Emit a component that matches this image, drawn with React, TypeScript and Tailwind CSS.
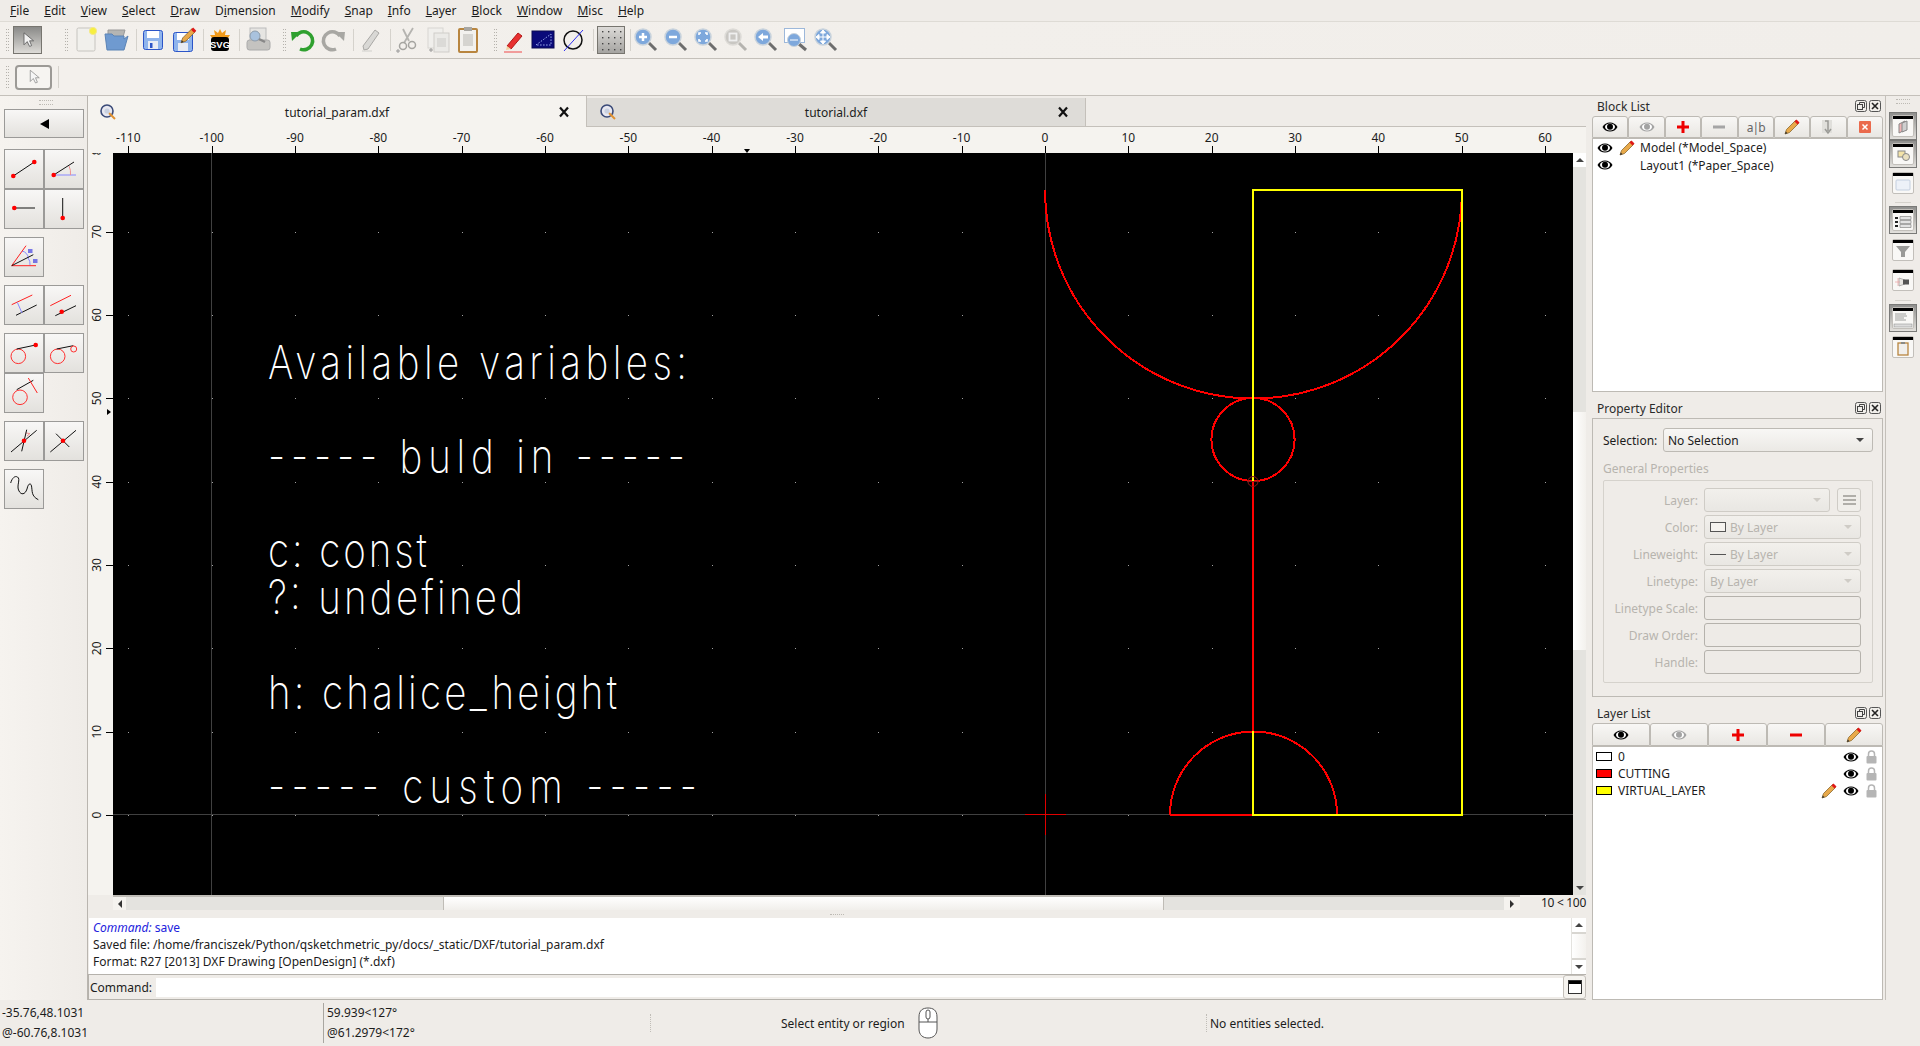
import type { ReactNode } from "react";

const X = (u: number) => 1045 + 8.3333 * u;
const Y = (u: number) => 815 - 8.3333 * u;

const menus: [string, string, string][] = [
  ["", "F", "ile"], ["", "E", "dit"], ["", "V", "iew"], ["", "S", "elect"], ["", "D", "raw"],
  ["D", "i", "mension"], ["", "M", "odify"], ["", "S", "nap"], ["", "I", "nfo"], ["", "L", "ayer"],
  ["", "B", "lock"], ["", "W", "indow"], ["", "M", "isc"], ["", "H", "elp"],
];

const Handle = ({ className = "" }: { className?: string }) => (
  <svg width="3" height="22" className={`shrink-0 ${className}`}>
    {[0, 3, 6, 9, 12, 15, 18, 21].map((y) => (
      <g key={y} fill="#b5b2ac">
        <rect x="0" y={y} width="1" height="1" />
        <rect x="2" y={y} width="1" height="1" />
      </g>
    ))}
  </svg>
);

const Sep = ({ className = "" }: { className?: string }) => (
  <div className={`w-[1px] h-[22px] bg-[#d5d2cc] shrink-0 ${className}`} />
);

const Slot = ({ children, className = "" }: { children: ReactNode; className?: string }) => (
  <svg width="30" height="30" viewBox="0 0 30 30" className={`shrink-0 ${className}`}>
    {children}
  </svg>
);

const Arrow = ({ fill = "#fff", stroke = "#333" }: { fill?: string; stroke?: string }) => (
  <path d="M10 6 L10 21 L14 17 L17 23 L19.5 22 L17 16 L22 16 Z" fill={fill} stroke={stroke} strokeWidth="1" />
);

const Pencil = ({ x = 0, y = 0, s = 1 }: { x?: number; y?: number; s?: number }) => (
  <g transform={`translate(${x} ${y}) scale(${s})`}>
    <path d="M1 15 L2.5 10.5 L11.5 1.5 L14.5 4.5 L5.5 13.5 Z" fill="#e8a94a" stroke="#8a6a30" strokeWidth="0.8" />
    <path d="M10.5 2.5 L12.5 0.5 L15.5 3.5 L13.5 5.5 Z" fill="#e01818" />
    <path d="M1 15 L1.8 12.5 L3.5 14.2 Z" fill="#333" />
  </g>
);

const Eye = ({ gray = false }: { gray?: boolean }) => (
  <svg width="16" height="12" viewBox="0 0 16 12" className="shrink-0">
    <path d="M0.5 6 C3.5 0 12.5 0 15.5 6 C12.5 12 3.5 12 0.5 6 Z" fill={gray ? "#a3a3a3" : "#000"} />
    <ellipse cx="8" cy="6" rx="5" ry="3.4" fill="#fff" />
    <circle cx="8" cy="5.8" r="3" fill={gray ? "#a3a3a3" : "#000"} />
  </svg>
);

const PencilIcon = () => (
  <svg width="16" height="16" viewBox="0 0 16 16" className="shrink-0">
    <Pencil />
  </svg>
);

const Lock = () => (
  <svg width="11" height="14" viewBox="0 0 11 14" className="shrink-0">
    <path d="M2.5 6 V4 A3 3 0 0 1 8.5 4 V6" fill="none" stroke="#b5b5b5" strokeWidth="1.5" />
    <rect x="0.5" y="6" width="10" height="7.5" rx="1" fill="#b5b5b5" />
  </svg>
);

const Magnifier = ({ children, gray = false }: { children: ReactNode; gray?: boolean }) => (
  <Slot>
    <line x1="17" y1="17" x2="25" y2="25" stroke={gray ? "#b5b3af" : "#6d6d6d"} strokeWidth="3" />
    <circle cx="12" cy="12" r="8" fill={gray ? "#c9c7c3" : "#7ea8dc"} stroke={gray ? "#dddbd7" : "#c9d3dc"} strokeWidth="1.5" />
    {children}
  </Slot>
);

const FloatClose = () => (
  <div className="flex gap-[2px]">
    <svg width="12" height="12" viewBox="0 0 12 12">
      <rect x="0.5" y="0.5" width="11" height="11" rx="2" fill="#f0eeea" stroke="#555" />
      <rect x="2.5" y="4.5" width="5" height="5" fill="none" stroke="#444" />
      <path d="M4.5 4.5 V2.5 H9.5 V7.5 H7.5" fill="none" stroke="#444" />
    </svg>
    <svg width="12" height="12" viewBox="0 0 12 12">
      <rect x="0.5" y="0.5" width="11" height="11" rx="2" fill="#f0eeea" stroke="#555" />
      <path d="M3 3 L9 9 M9 3 L3 9" stroke="#222" strokeWidth="1.6" />
    </svg>
  </div>
);

const DockTitle = ({ title, className = "" }: { title: string; className?: string }) => (
  <div className={`flex items-center justify-between pl-[5px] pr-[2px] shrink-0 ${className}`}>
    <span className="text-[#2a2a2a]">{title}</span>
    <FloatClose />
  </div>
);

const DockButton = ({ children }: { children: ReactNode }) => (
  <div className="flex-1 h-full flex items-center justify-center border border-[#bdbab4] rounded-t-[3px] bg-gradient-to-b from-[#f8f7f5] to-[#e9e7e3]">
    {children}
  </div>
);

const Red = ({ d }: { d: string }) => <path d={d} fill="none" stroke="#ff2020" strokeWidth="1" />;
const Blk = ({ d }: { d: string }) => <path d={d} fill="none" stroke="#111" strokeWidth="1" />;
const Blu = ({ d }: { d: string }) => <path d={d} fill="none" stroke="#8888ff" strokeWidth="1" />;
const Dot = ({ x, y }: { x: number; y: number }) => <circle cx={x} cy={y} r="2.3" fill="#ff0000" />;

const Tool = ({ children }: { children?: ReactNode }) => (
  <div className="w-[40px] h-[40px] border border-[#9b9a98] bg-gradient-to-b from-[#f8f7f6] to-[#e3e1dd]">
    {children && (
      <svg width="38" height="38" viewBox="1 1 38 38">
        {children}
      </svg>
    )}
  </div>
);

const ToolRow = ({ children }: { children: ReactNode }) => <div className="flex">{children}</div>;

const leftGroups: ReactNode[][][] = [
  [
    [
      <><Blk d="M9.3 27 L30.3 13" /><Dot x={9.3} y={27} /><Dot x={30.3} y={13} /></>,
      <><Blk d="M9.7 26 L30 13" /><Blu d="M9.7 26 H32" /><path d="M25 17 Q27 21 26.5 26" fill="none" stroke="#f09090" /><Dot x={9.7} y={26} /></>,
    ],
    [
      <><Blk d="M10.3 19 H31" /><Dot x={10.3} y={19} /></>,
      <><Blk d="M18.7 9 V29" /><Dot x={18.7} y={29} /></>,
    ],
  ],
  [
    [
      <>
        <Blu d="M18 14 Q23 15 24.5 21 M24 21 Q26.5 24 26 28" />
        <Red d="M7.7 28.7 L22 8.7 M7.7 28.7 H32" />
        <Blk d="M7.7 28.7 L29.3 17.7" />
        <path d="M24 13 H28.5 M24 15 H28.5 M29 23 H33.5 M29 25 H33.5" stroke="#0000e0" />
      </>,
    ],
  ],
  [
    [
      <><Red d="M7.7 19.7 L28.3 10" /><Blk d="M12 30.3 L32.7 20" /><Blu d="M13.3 17.3 L18 28" /></>,
      <><Red d="M6.3 20.7 L27 10.3" /><Blk d="M11.3 30.7 L32 20.7" /><Dot x={17.7} y={26.7} /></>,
    ],
  ],
  [
    [
      <><circle cx="14.3" cy="23.3" r="7.3" fill="none" stroke="#ff3030" /><Blk d="M12.7 16 L31.7 12" /><Dot x={31.7} y={12} /></>,
      <><circle cx="13.7" cy="23.3" r="7.3" fill="none" stroke="#ff3030" /><Blk d="M12.7 16 L29.3 12.7" /><circle cx="29.7" cy="16" r="3" fill="none" stroke="#ff3030" /></>,
    ],
    [
      <><circle cx="16" cy="24.3" r="7.3" fill="none" stroke="#ff3030" /><Blk d="M12.7 16.7 L29.3 7.3" /><Red d="M24.3 5 L33.3 20" /></>,
    ],
  ],
  [
    [
      <><path d="M21.5 12 L26 12.5 L23 15" fill="none" stroke="#f09090" /><Blk d="M7 31 L32.7 9.3 M17.7 30.3 L22.7 8.7" /><Dot x={20} y={19.7} /></>,
      <><Blk d="M6.3 31 L32 9.3 M12 12.7 L25.3 26" /><Dot x={19} y={19.7} /></>,
    ],
  ],
  [
    [
      <path d="M6.7 14 C8 9 11 6.5 13.5 8 C17 10 12 17 15 22 C17 26 21 26 23 20 C24 15 26.5 13 27.5 17 C28.5 22 27 27 34.3 30.7" fill="none" stroke="#111" strokeWidth="1" />,
    ],
  ],
];

const hLabels = [-110, -100, -90, -80, -70, -60, -50, -40, -30, -20, -10, 0, 10, 20, 30, 40, 50, 60];
const vLabels = [80, 70, 60, 50, 40, 30, 20, 10, 0];
const canvasLines: [string, number, number, number][] = [
  ["Available variables:", 268, 379, 419],
  ["----- buld in -----", 268, 473, 417],
  ["c: const", 268, 567, 159],
  ["?: undefined", 268, 614, 255],
  ["h: chalice_height", 268, 709, 349],
  ["----- custom -----", 268, 803, 429],
];
const TEXT_SQUEEZE = 0.82;

const Canvas = () => {
  const dotsX = Array.from({ length: 18 }, (_, i) => X((i - 11) * 10));
  const dotsY = Array.from({ length: 9 }, (_, i) => Y(i * 10));
  return (
    <svg width="1460" height="742" viewBox="113 153 1460 742" className="block bg-black shrink-0">
      <g fill="#a0a0a0" shapeRendering="crispEdges">
        {dotsX.flatMap((x) => dotsY.map((y) => <rect key={`${x}-${y}`} x={Math.round(x)} y={Math.round(y)} width="1" height="1" />))}
      </g>
      <g stroke="#404040" shapeRendering="crispEdges">
        <line x1="113" x2="1573" y1="814.5" y2="814.5" />
        <line x1="1045.5" x2="1045.5" y1="153" y2="895" />
        <line x1="211.5" x2="211.5" y1="153" y2="895" />
      </g>
      <g stroke="#e00000" shapeRendering="crispEdges">
        <line x1="1025" x2="1066" y1="814.5" y2="814.5" />
        <line x1="1045.5" x2="1045.5" y1="794" y2="835" />
      </g>
      {canvasLines.map(([text, x, y, len]) => (
        <g key={text} transform={`translate(${x} ${y}) scale(${TEXT_SQUEEZE} 1)`}>
          <text textLength={len / TEXT_SQUEEZE} lengthAdjust="spacing" fill="#fff" fontSize="47" fontWeight="200" fontFamily="Inter, sans-serif">
            {text}
          </text>
        </g>
      ))}
      <g fill="none" stroke="#ff0000" strokeWidth="2" shapeRendering="crispEdges">
        <path d="M1045 190 A 208.5 208.5 0 0 0 1462 190" />
        <circle cx="1253" cy="439.5" r="41.6" />
        <path d="M1170 815 A 83.3 83.3 0 0 1 1337 815" />
        <path d="M1170 815 H1253" />
      </g>
      <rect x="1253" y="190" width="209" height="625" fill="none" stroke="#ffff00" strokeWidth="2" shapeRendering="crispEdges" />
      <path d="M1253 481 V731" stroke="#ff0000" strokeWidth="2" shapeRendering="crispEdges" />
      <g fill="none" stroke="#8c1a1a" strokeWidth="1">
        <circle cx="1253" cy="481.5" r="5" />
        <path d="M1247 481.5 H1259" />
      </g>
    </svg>
  );
};

const DockBarIcon = ({ checked = false, className = "", children }: { checked?: boolean; className?: string; children?: ReactNode }) => (
  <div className={`w-[28px] flex items-center justify-center shrink-0 ${checked ? "h-[28px] border border-[#7a7a78] bg-gradient-to-b from-[#8f8f8d] to-[#e3e1dd]" : "h-[22px]"} ${className}`}>
    <svg width="22" height="22" viewBox="0 0 22 22">
      <rect x="0.5" y="0.5" width="21" height="21" rx="1.5" fill="#f9f8f6" stroke="#c2bfba" />
      <rect x="1" y="1" width="20" height="3" fill="#000" />
      {children}
    </svg>
  </div>
);

const Combo = ({ children, className = "" }: { children?: ReactNode; className?: string }) => (
  <div className={`h-[24px] flex items-center px-[5px] border border-[#cfccc6] rounded-[3px] bg-gradient-to-b from-[#f2f0ec] to-[#e9e7e3] text-[#b7b4ae] ${className}`}>
    {children}
    <span className="ml-auto mr-[3px] w-0 h-0 border-x-[4px] border-x-transparent border-t-[4px] border-t-[#cfccc6]" />
  </div>
);

const PropRow = ({ label, children }: { label: string; children: ReactNode }) => (
  <div className="flex items-center h-[24px] mb-[3px]">
    <span className="w-[94px] text-right text-[#b7b4ae] shrink-0">{label}</span>
    <div className="ml-[6px] flex flex-1 gap-[7px]">{children}</div>
  </div>
);

const Field = () => <div className="flex-1 h-[24px] border border-[#b5b2ac] rounded-[3px] bg-[#eeebe7]" />;

const Dotted = () => <div className="w-[1px] h-[18px] border-l border-dotted border-[#c0bdb7] shrink-0" />;

export default function App() {
  return (
    <div className="w-[1920px] h-[1046px] overflow-hidden flex flex-col bg-[#efece8] text-[12px] leading-[17px] text-[#1c1c1c] font-['Noto_Sans',sans-serif]">
      {/* menu bar */}
      <div className="h-[22px] flex items-center pl-[2.5px] border-b border-[#dedbd5] shrink-0">
        {menus.map(([before, key, rest], i) => (
          <span key={i} className="px-[7.5px]">
            {before}<span className="underline">{key}</span>{rest}
          </span>
        ))}
      </div>

      {/* main toolbar */}
      <div className="h-[37px] flex items-center pl-[6px] border-b border-[#c4c0ba] bg-gradient-to-r from-[#f3f0ec] to-[#f1eeea] shrink-0">
        <Handle />
        <div className="ml-[4px] w-[29px] h-[28px] flex items-center justify-center border border-[#77756f] bg-gradient-to-b from-[#8a8a88] to-[#dddbd7] shrink-0">
          <svg width="24" height="26" viewBox="0 0 30 30"><Arrow fill="#f2f2f2" stroke="#555" /></svg>
        </div>
        <Handle className="ml-[23px]" />
        <Slot className="ml-[3px]">
          <rect x="6" y="3" width="18" height="23" rx="1.5" fill="#f1f0ec" stroke="#c6c4bf" />
          <circle cx="22" cy="6" r="3.6" fill="#f7ef40" stroke="#f3e98c" />
        </Slot>
        <Slot>
          <path d="M7 5 H24 L22 12 H7 Z" fill="#b5b5b3" stroke="#999" />
          <path d="M4 9 H11 L13 11 H23 V14 L27 11 L23 25 H6 Z" fill="#6f9ad0" stroke="#5b83b5" />
        </Slot>
        <Sep className="ml-[5px]" />
        <Slot className="ml-[1px]">
          <rect x="5.5" y="5.5" width="19" height="19" rx="2" fill="#8fb4ec" stroke="#2c55c8" />
          <rect x="9" y="6" width="12" height="7" fill="#fff" />
          <rect x="10" y="16" width="10" height="8" fill="#e8ecf4" />
          <rect x="12" y="18" width="2.5" height="5" fill="#2c55c8" />
        </Slot>
        <Slot className="ml-[1px]">
          <rect x="4.5" y="7.5" width="19" height="19" rx="2" fill="#8fb4ec" stroke="#2c55c8" />
          <rect x="8" y="8" width="12" height="7" fill="#fff" />
          <rect x="9" y="18" width="10" height="8" fill="#e8ecf4" />
          <Pencil x={11} y={2} s={1.05} />
        </Slot>
        <Sep className="ml-[4px]" />
        <Slot className="ml-[1px]">
          <path d="M15 4 L17 8 L21 5 L20 10 L25 10 L23 13 H7 L5 10 L10 10 L9 5 L13 8 Z" fill="#f09a1c" />
          <rect x="6" y="12" width="18" height="14" rx="3" fill="#000" />
          <text x="15" y="23" textAnchor="middle" fontSize="9.5" fontWeight="700" fill="#fff" fontFamily="'Liberation Sans', sans-serif">SVG</text>
        </Slot>
        <Sep className="ml-[4px]" />
        <Slot className="ml-[3px]">
          <rect x="7" y="3" width="16" height="14" fill="#e6e5e2" stroke="#bbb" />
          <rect x="4" y="15" width="23" height="10" rx="2.5" fill="#c4c3c0" stroke="#aaa" />
          <circle cx="12" cy="11" r="5" fill="#a9c2dd" stroke="#8d9cab" />
          <path d="M16 14 L22 17" stroke="#888" strokeWidth="2.5" />
        </Slot>
        <Handle className="ml-[10px]" />
        <Slot className="ml-[2px]">
          <path d="M8 11 A9 9 0 1 1 12 24" fill="none" stroke="#2fa02f" strokeWidth="3.5" />
          <path d="M3 7 L13 7 L4 16 Z" fill="#2fa02f" />
        </Slot>
        <Slot>
          <path d="M22 11 A9 9 0 1 0 18 24" fill="none" stroke="#a8a7a3" strokeWidth="3.5" />
          <path d="M27 7 L17 7 L26 16 Z" fill="#a8a7a3" />
        </Slot>
        <Sep className="ml-[5px]" />
        <Slot className="ml-[1px]">
          <path d="M8 21 L20 5 L24 8 L13 24 L9 25 Z" fill="#d9d8d5" stroke="#a9a8a5" />
          <path d="M7 26 H17" stroke="#d0cfcb" />
        </Slot>
        <Sep className="ml-[5px]" />
        <Slot className="ml-[1px]">
          <path d="M21 3 L12 18 M11 4 L17 16" stroke="#b5b4b0" strokeWidth="1.8" />
          <circle cx="11" cy="21" r="3.5" fill="none" stroke="#a5a4a0" strokeWidth="1.5" />
          <circle cx="20" cy="20" r="3.5" fill="none" stroke="#a5a4a0" strokeWidth="1.5" />
          <path d="M4 26 H8 M6 24 V28" stroke="#999" />
        </Slot>
        <Slot className="ml-[1px]">
          <rect x="5" y="3" width="15" height="20" fill="#f0efec" stroke="#d8d6d2" />
          <rect x="11" y="8" width="15" height="19" fill="#ebeae7" stroke="#cfcdc9" />
          <rect x="14" y="13" width="9" height="9" fill="#dbdad7" />
          <path d="M6 25 H10 M8 23 V27" stroke="#999" />
        </Slot>
        <Slot>
          <rect x="6" y="4" width="18" height="23" rx="1" fill="#f2f1ee" stroke="#b8853f" strokeWidth="2" />
          <rect x="11" y="2" width="8" height="4" fill="#a8a7a3" />
          <rect x="10" y="9" width="10" height="12" fill="#d5d4d0" />
        </Slot>
        <Handle className="ml-[11px]" />
        <Slot className="ml-[1px]">
          <path d="M9 21 L20 8 L24 11 L13 24 Z" fill="#e83030" stroke="#b01818" />
          <path d="M9 21 L8 25 L13 24 Z" fill="#f4d0a0" />
          <path d="M6 27 H24" stroke="#f08080" strokeWidth="1.5" />
        </Slot>
        <Slot>
          <rect x="4" y="6" width="22" height="17" fill="#0a0a7a" stroke="#0a0a50" />
          <path d="M8 20 L23 9 V20 Z" fill="none" stroke="#9fb0f0" strokeDasharray="1.5 1.5" />
        </Slot>
        <Slot>
          <circle cx="15" cy="15" r="9" fill="none" stroke="#111" strokeWidth="1.5" />
          <path d="M6 26 L25 5" stroke="#3030f0" />
        </Slot>
        <Sep className="ml-[5px]" />
        <div className="ml-[3px] w-[28px] h-[28px] border border-[#77756f] bg-gradient-to-b from-[#dddbd8] to-[#a5a4a1] shrink-0 flex items-center justify-center">
          <svg width="22" height="22" viewBox="0 0 22 22" fill="#444">
            {[2, 8, 14, 20].flatMap((y) => [2, 8, 14, 20].map((x) => <rect key={`${x}${y}`} x={x} y={y} width="1.4" height="1.4" />))}
          </svg>
        </div>
        <Sep className="ml-[5px]" />
        <Magnifier><path d="M8 12 H16 M12 8 V16" stroke="#fff" strokeWidth="2.5" /></Magnifier>
        <Magnifier><path d="M8 12 H16" stroke="#fff" strokeWidth="2.5" /></Magnifier>
        <Magnifier><path d="M8 10 V8 H10 M14 8 H16 V10 M16 14 V16 H14 M10 16 H8 V14" stroke="#fff" strokeWidth="1.6" fill="none" /></Magnifier>
        <Magnifier gray><rect x="8.5" y="8.5" width="7" height="7" fill="none" stroke="#efefef" strokeWidth="1.8" /></Magnifier>
        <Magnifier><path d="M7 12 L12 8 V10.5 H17 V13.5 H12 V16 Z" fill="#fff" /></Magnifier>
        <Slot>
          <line x1="18" y1="19" x2="25" y2="25" stroke="#6d6d6d" strokeWidth="3" />
          <rect x="3.5" y="3.5" width="20" height="14" fill="#fff" stroke="#9db8da" />
          <circle cx="13" cy="15" r="6.5" fill="#7ea8dc" stroke="#c9d3dc" />
          <path d="M9 15 H17" stroke="#fff" />
        </Slot>
        <Magnifier><path d="M12 5 L14.5 8 H9.5 Z M12 19 L9.5 16 H14.5 Z M5 12 L8 9.5 V14.5 Z M19 12 L16 14.5 V9.5 Z M12 8 V16 M8 12 H16" fill="#fff" stroke="#fff" /></Magnifier>
      </div>

      {/* option toolbar */}
      <div className="h-[37px] flex items-center pl-[6px] border-b border-[#c4c0ba] bg-[#f3f0ec] shrink-0">
        <Handle />
        <div className="ml-[6px] w-[37px] h-[25px] flex items-center justify-center rounded-[4px] border-2 border-[#9c9a96] bg-[#f6f4f1] shrink-0">
          <svg width="18" height="18" viewBox="3 3 24 24"><Arrow fill="#f6f6f6" stroke="#888" /></svg>
        </div>
        <Sep className="ml-[6px]" />
      </div>

      <div className="h-[904px] flex shrink-0">
        {/* left tools */}
        <div className="w-[88px] pl-[4px] border-r border-[#b9b5af] bg-gradient-to-r from-[#f6f3ef] to-[#efece8] shrink-0 flex flex-col">
          <div className="h-[13px] flex justify-center items-center">
            <div className="w-[14px] h-[5px] border-y border-dotted border-[#bdbab4]" />
          </div>
          <div className="w-[80px] h-[29px] flex items-center justify-center border border-[#9b9a98] bg-gradient-to-b from-[#f8f7f6] to-[#e3e1dd]">
            <span className="w-0 h-0 border-y-[5px] border-y-transparent border-r-[9px] border-r-black" />
          </div>
          <div className="mt-[11px] flex flex-col gap-[8px]">
            {leftGroups.map((rows, g) => (
              <div key={g} className="flex flex-col">
                {rows.map((row, r) => (
                  <ToolRow key={r}>
                    {row.map((icon, i) => (
                      <Tool key={i}>{icon}</Tool>
                    ))}
                  </ToolRow>
                ))}
              </div>
            ))}
          </div>
        </div>

        {/* centre */}
        <div className="w-[1498px] flex flex-col shrink-0">
          <div className="h-[31px] flex shrink-0">
            <div className="w-[499px] flex items-center pt-[1px] relative bg-[#f5f3ef] border-r border-[#c4c0ba]">
              <TabIcon className="left-[12px] top-[8px]" />
              <span className="w-full text-center">tutorial_param.dxf</span>
              <span className="absolute left-[470px] top-[10px]"><TabClose /></span>
            </div>
            <div className="w-[499px] mt-[2px] flex items-center relative bg-[#dedcd8] border-r border-b border-[#c4c0ba]">
              <TabIcon className="left-[13px] top-[6px]" />
              <span className="w-full text-center">tutorial.dxf</span>
              <span className="absolute left-[470px] top-[8px]"><TabClose /></span>
            </div>
            <div className="flex-1 border-b border-[#c4c0ba]" />
          </div>

          <div className="flex flex-col bg-[#f5f3ef] shrink-0">
            <svg width="1498" height="26" viewBox="88 127 1498 26" className="block shrink-0">
              {hLabels.map((u) => (
                <g key={u}>
                  <text x={X(u)} y="141.5" textAnchor="middle" fontSize="12" fill="#1c1c1c" fontFamily="'Noto Sans', sans-serif">{u}</text>
                  <line x1={Math.round(X(u)) + 0.5} x2={Math.round(X(u)) + 0.5} y1="146" y2="153" stroke="#000" />
                </g>
              ))}
              <path d="M744 149 H750 L747 153 Z" fill="#000" />
            </svg>
            <div className="flex h-[742px]">
              <svg width="25" height="742" viewBox="88 153 25 742" className="block shrink-0">
                {vLabels.map((u) => (
                  <g key={u}>
                    <text transform={`translate(101 ${Y(u)}) rotate(-90)`} textAnchor="middle" fontSize="12" fill="#1c1c1c" fontFamily="'Noto Sans', sans-serif">{u}</text>
                    <line x1="106" x2="113" y1={Math.round(Y(u)) + 0.5} y2={Math.round(Y(u)) + 0.5} stroke="#000" />
                  </g>
                ))}
                <path d="M107 409 V415 L111 412 Z" fill="#000" />
              </svg>
              <Canvas />
              <div className="w-[13px] flex flex-col bg-[#e4e3df]">
                <div className="h-[14px] bg-white flex items-center justify-center"><Tri dir="up" /></div>
                <div className="h-[245px]" />
                <div className="h-[238px] bg-gradient-to-r from-white to-[#f3f1ed]" />
                <div className="flex-1" />
                <div className="h-[15px] flex items-center justify-center"><Tri dir="down" /></div>
              </div>
            </div>
          </div>

          {/* horizontal scroll */}
          <div className="h-[15px] flex border-t-2 border-[#bfbcb6] shrink-0">
            <div className="w-[25px] bg-[#efece8] -mt-[2px]" />
            <div className="w-[13px] flex items-center justify-center bg-[#f5f3ef]"><span className="w-0 h-0 border-y-[4px] border-y-transparent border-r-[4px] border-r-[#333]" /></div>
            <div className="w-[318px] bg-[#e4e3df] border-r border-[#bfbcb6]" />
            <div className="w-[719px] bg-gradient-to-b from-white to-[#f1efeb]" />
            <div className="w-[341px] bg-[#e4e3df] border-l border-[#bfbcb6]" />
            <div className="w-[16px] flex items-center justify-center bg-[#f5f3ef]"><span className="w-0 h-0 border-y-[4px] border-y-transparent border-l-[4px] border-l-[#333]" /></div>
            <div className="flex-1 flex items-center justify-end -mt-[2px] bg-[#efece8] text-[12px] tracking-[-0.3px]">10 &lt; 100</div>
          </div>
          <div className="h-[8px] flex justify-center items-center shrink-0">
            <div className="w-[14px] h-[1px] border-t border-dotted border-[#bdbab4]" />
          </div>

          {/* command output */}
          <div className="h-[57px] flex bg-white border-b border-[#b5b2ac] shrink-0">
            <div className="flex-1 pl-[4px] pt-[1px] border-l border-[#efece8]">
              <div className="text-[#2222dd]"><i>Command:</i> save</div>
              <div>Saved file: /home/franciszek/Python/qsketchmetric_py/docs/_static/DXF/tutorial_param.dxf</div>
              <div>Format: R27 [2013] DXF Drawing [OpenDesign] (*.dxf)</div>
            </div>
            <div className="w-[15px] flex flex-col items-center bg-white border-l border-[#e4e3df]">
              <div className="h-[14px] flex items-center"><Tri dir="up" /></div>
              <div className="h-[28px] w-full bg-gradient-to-r from-white to-[#f3f1ed] border-y-2 border-[#d8d6d1]" />
              <div className="flex-1 flex items-center"><Tri dir="down" /></div>
            </div>
          </div>
          <div className="h-[25px] flex items-center pl-[1px] border-l border-[#b5b2ac] border-b border-b-[#b5b2ac] shrink-0">
            <span className="w-[66px]">Command:</span>
            <div className="w-[1407px] h-[19px] bg-white" />
            <div className="w-[23px] h-[24px] flex items-center justify-center rounded-[3px] border border-[#c4c0ba] bg-[#f5f3ef]">
              <svg width="14" height="14" viewBox="0 0 14 14">
                <rect x="0.5" y="0.5" width="13" height="13" fill="#fff" stroke="#333" />
                <rect x="1" y="1" width="12" height="3" fill="#000" />
              </svg>
            </div>
          </div>
        </div>

        {/* docks */}
        <div className="w-[300px] pl-[6px] pr-[2px] border-r border-[#c4c0ba] flex flex-col shrink-0">
          <DockTitle title="Block List" className="h-[20px]" />
          <div className="h-[22px] flex shrink-0">
            <DockButton><Eye /></DockButton>
            <DockButton><Eye gray /></DockButton>
            <DockButton>
              <svg width="14" height="14"><path d="M7 1 V13 M1 7 H13" stroke="#ee0000" strokeWidth="3" /></svg>
            </DockButton>
            <DockButton>
              <svg width="14" height="14"><path d="M1 7 H13" stroke="#a5a5a5" strokeWidth="3" /></svg>
            </DockButton>
            <DockButton><span className="text-[#666] tracking-[-1px]">a|b</span></DockButton>
            <DockButton><PencilIcon /></DockButton>
            <DockButton>
              <svg width="14" height="16" viewBox="0 0 14 16">
                <rect x="1" y="1" width="10" height="13" fill="#e0dfdb" />
                <path d="M4 2 H7 V12 M4 10 L7 14 L10 10" fill="none" stroke="#9a9a96" strokeWidth="1.5" />
              </svg>
            </DockButton>
            <DockButton>
              <svg width="12" height="12">
                <rect width="12" height="12" rx="1" fill="#ea6a4c" />
                <path d="M3.5 3.5 L8.5 8.5 M8.5 3.5 L3.5 8.5" stroke="#fff" strokeWidth="1.5" />
              </svg>
            </DockButton>
          </div>
          <div className="h-[254px] bg-white border border-[#bdbab4] shrink-0">
            {[
              ["Model (*Model_Space)", true],
              ["Layout1 (*Paper_Space)", false],
            ].map(([name, active]) => (
              <div key={String(name)} className="h-[17.5px] flex items-center pl-[4px]">
                <Eye />
                <span className="w-[23px] flex justify-center pl-[4px]">{active && <PencilIcon />}</span>
                <span className="ml-[4px]">{name}</span>
              </div>
            ))}
          </div>
          <DockTitle title="Property Editor" className="h-[26px] pt-[6px]" />
          <div className="h-[279px] border border-[#bdbab4] pl-[10px] pr-[9px] pt-[9px] shrink-0">
            <div className="flex items-center">
              <span className="w-[60px]">Selection:</span>
              <div className="w-[210px] h-[24px] flex items-center px-[4px] border border-[#bdbab4] rounded-[3px] bg-gradient-to-b from-[#f8f7f5] to-[#ebe9e5]">
                No Selection
                <span className="ml-auto mr-[4px] w-0 h-0 border-x-[4px] border-x-transparent border-t-[4px] border-t-[#444]" />
              </div>
            </div>
            <div className="mt-[8px] text-[#b7b4ae]">General Properties</div>
            <div className="mt-[3px] w-[270px] h-[203px] border border-[#d5d2cc] rounded-[2px] pt-[7px] pr-[11px]">
              <PropRow label="Layer:">
                <Combo className="flex-1" />
                <div className="w-[24px] h-[24px] flex flex-col items-center justify-center gap-[2px] border border-[#cfccc6] rounded-[3px] bg-[#f0eeea]">
                  <span className="w-[13px] h-[2px] bg-[#b0aea9]" />
                  <span className="w-[13px] h-[2px] bg-[#b0aea9]" />
                  <span className="w-[13px] h-[2px] bg-[#b0aea9]" />
                </div>
              </PropRow>
              <PropRow label="Color:">
                <Combo className="flex-1">
                  <span className="w-[16px] h-[10px] border border-[#555] bg-[#f5f3ef] mr-[4px]" />By Layer
                </Combo>
              </PropRow>
              <PropRow label="Lineweight:">
                <Combo className="flex-1">
                  <span className="w-[16px] h-[1px] bg-[#555] mr-[4px]" />By Layer
                </Combo>
              </PropRow>
              <PropRow label="Linetype:">
                <Combo className="flex-1">By Layer</Combo>
              </PropRow>
              <PropRow label="Linetype Scale:"><Field /></PropRow>
              <PropRow label="Draw Order:"><Field /></PropRow>
              <PropRow label="Handle:"><Field /></PropRow>
            </div>
          </div>
          <DockTitle title="Layer List" className="h-[26px] pt-[6px]" />
          <div className="h-[23px] flex shrink-0">
            <DockButton><Eye /></DockButton>
            <DockButton><Eye gray /></DockButton>
            <DockButton>
              <svg width="14" height="14"><path d="M7 1 V13 M1 7 H13" stroke="#ee0000" strokeWidth="3" /></svg>
            </DockButton>
            <DockButton>
              <svg width="14" height="14"><path d="M1 7 H13" stroke="#ee0000" strokeWidth="3" /></svg>
            </DockButton>
            <DockButton><PencilIcon /></DockButton>
          </div>
          <div className="flex-1 bg-white border border-[#bdbab4] pt-[1px]">
            {[
              ["0", "bg-white", false],
              ["CUTTING", "bg-[#ff0000]", false],
              ["VIRTUAL_LAYER", "bg-[#ffff00]", true],
            ].map(([name, swatch, active]) => (
              <div key={String(name)} className="h-[17px] flex items-center pl-[3px] pr-[5px]">
                <span className={`w-[16px] h-[9px] border border-black ${swatch}`} />
                <span className="ml-[6px]">{name}</span>
                <span className="ml-auto w-[16px]">{active && <PencilIcon />}</span>
                <span className="ml-[6px]"><Eye /></span>
                <span className="ml-[7px]"><Lock /></span>
              </div>
            ))}
          </div>
        </div>

        {/* dock toggles */}
        <div className="w-[34px] flex flex-col items-center pt-[3px] shrink-0">
          <div className="w-[14px] h-[5px] border-y border-dotted border-[#bdbab4] mb-[8px] shrink-0" />
          <DockBarIcon checked>
            <path d="M7 9 L13 6 V15 L7 18 Z" fill="#f0b5b5" stroke="#888" />
            <path d="M10 8 L15 6 V15 L10 17 Z" fill="#cfcfcf" stroke="#888" />
          </DockBarIcon>
          <DockBarIcon checked>
            <rect x="6" y="8" width="7" height="6" fill="#f3e3a8" stroke="#888" />
            <circle cx="14" cy="14" r="3.5" fill="#e9e0c0" stroke="#888" />
          </DockBarIcon>
          <DockBarIcon className="mt-[4px]">
            <rect x="4" y="8" width="14" height="10" rx="1" fill="#edf1f8" stroke="#c4cfdf" />
          </DockBarIcon>
          <div className="w-[16px] h-[1px] bg-[#d5d2cc] mt-[8px] shrink-0" />
          <DockBarIcon checked className="mt-[3px]">
            <path d="M3 8 H6 V10 H3 Z M3 12 H6 V14 H3 Z M3 16 H6 V18 H3 Z" fill="#222" />
            <path d="M8 7.5 H19 V10.5 H8 Z M8 11.5 H19 V14.5 H8 Z M8 15.5 H19 V18.5 H8 Z" fill="#e2e2e2" stroke="#888" strokeWidth="0.7" />
          </DockBarIcon>
          <DockBarIcon className="mt-[5px]">
            <path d="M4 7 H18 L13 13 V18 L9 18 V13 Z" fill="#9a9a98" />
          </DockBarIcon>
          <DockBarIcon className="mt-[8px]">
            <path d="M7 9 L13 11 V15 L7 17 Z" fill="#e8e6e2" stroke="#999" strokeWidth="0.7" />
            <rect x="11" y="10.5" width="6" height="5" fill="#555" />
            <path d="M3 13 H8 M6 9 V17" stroke="#e8a0a0" strokeWidth="0.7" />
          </DockBarIcon>
          <div className="w-[16px] h-[1px] bg-[#d5d2cc] mt-[9px] shrink-0" />
          <DockBarIcon checked className="mt-[3px]">
            <path d="M3 7 H14 M3 9 H15 M3 11 H12 M3 13 H14" stroke="#888" strokeWidth="0.8" />
            <rect x="2" y="17" width="18" height="3" fill="#dcdcdc" stroke="#888" strokeWidth="0.5" />
          </DockBarIcon>
          <DockBarIcon className="mt-[4px]">
            <rect x="6" y="7" width="10" height="12" fill="#f1efec" stroke="#b8853f" strokeWidth="1.3" />
            <rect x="9" y="6" width="4" height="2" fill="#8a8a86" />
          </DockBarIcon>
        </div>
      </div>

      {/* status bar */}
      <div className="flex-1 flex items-center">
        <div className="w-[324px] h-[40px] flex flex-col justify-between pl-[2px] border-r border-[#a9a6a0] leading-[20px]">
          <div>-35.76,48.1031</div>
          <div>@-60.76,8.1031</div>
        </div>
        <div className="w-[326px] h-[40px] flex flex-col justify-between pl-[3px] leading-[20px]">
          <div>59.939&lt;127°</div>
          <div>@61.2979&lt;172°</div>
        </div>
        <Dotted />
        <div className="w-[555px] h-[40px] flex items-center pl-[130px]">
          <span>Select entity or region</span>
          <svg width="20" height="32" viewBox="0 0 20 32" className="ml-[13px]">
            <path d="M1 10 C1 3 5 1 10 1 C15 1 19 3 19 10 V22 C19 28 15 31 10 31 C5 31 1 28 1 22 Z" fill="#fff" stroke="#555" />
            <path d="M1 15 H19" stroke="#555" />
            <rect x="8" y="3" width="4" height="9" rx="2" fill="#fff" stroke="#555" />
            <path d="M10 12 V15" stroke="#555" />
          </svg>
        </div>
        <Dotted />
        <div className="h-[40px] flex items-center pl-[3px]">No entities selected.</div>
      </div>
    </div>
  );
}

function TabIcon({ className }: { className: string }) {
  return (
    <svg width="16" height="16" viewBox="0 0 16 16" className={`absolute ${className}`}>
      <circle cx="7" cy="7" r="6" fill="#e8e8f0" stroke="#3a4a78" strokeWidth="1.6" />
      <path d="M9 9 L15 15" stroke="#e09030" strokeWidth="2" />
      <circle cx="7" cy="7" r="2.6" fill="#c8d0e0" />
    </svg>
  );
}

function TabClose() {
  return (
    <svg width="12" height="12" viewBox="0 0 12 12">
      <path d="M2 1.5 L10 10.5 M10 1.5 L2 10.5" stroke="#111" strokeWidth="2.2" />
    </svg>
  );
}

function Tri({ dir }: { dir: "up" | "down" }) {
  return dir === "up" ? (
    <span className="w-0 h-0 border-x-[4px] border-x-transparent border-b-[4px] border-b-[#444]" />
  ) : (
    <span className="w-0 h-0 border-x-[4px] border-x-transparent border-t-[4px] border-t-[#444]" />
  );
}
